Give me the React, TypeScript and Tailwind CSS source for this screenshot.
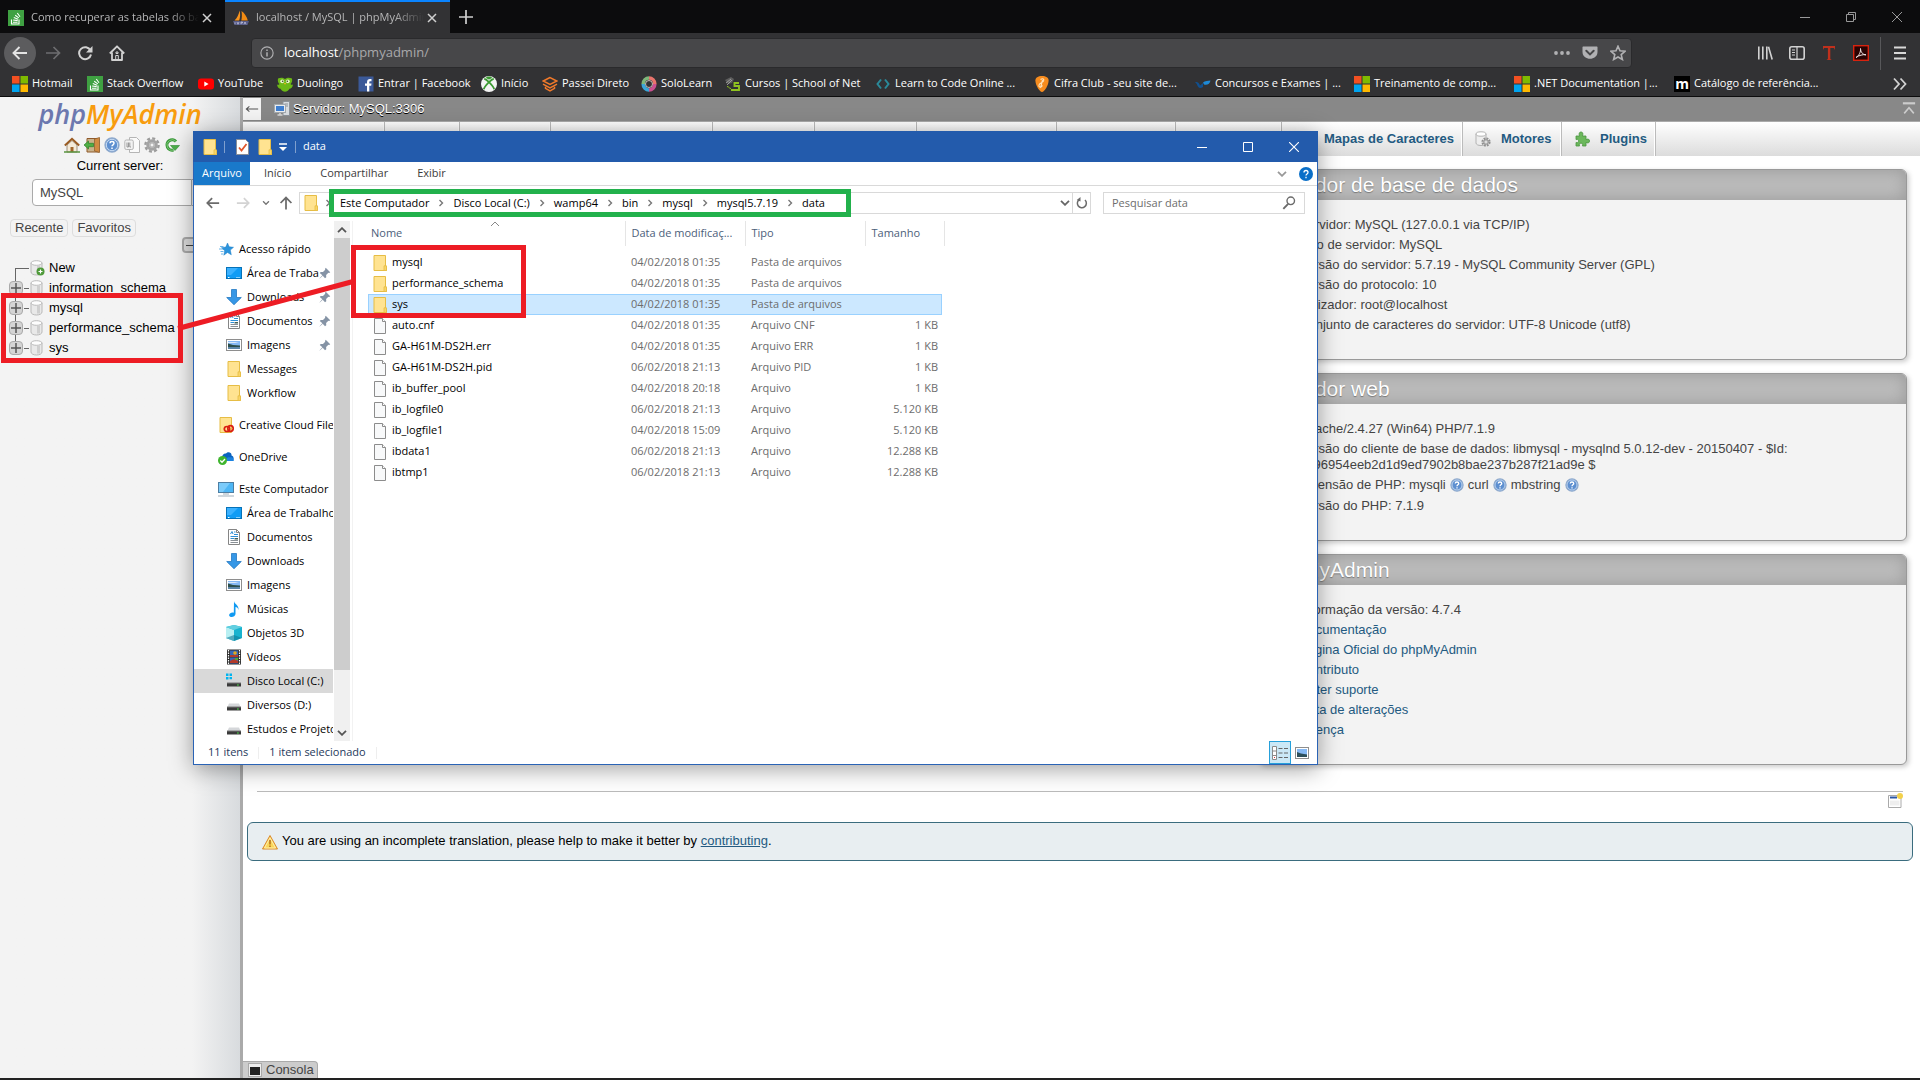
import React from "react";

type P = { className?: string; children?: React.ReactNode };

const Svg = ({ className = "size-4", children }: P) => (
  <svg viewBox="0 0 16 16" className={`shrink-0 ${className}`} fill="none" aria-hidden="true">
    {children}
  </svg>
);

/* ---------- site icons ---------- */
const StackIcon = () => (
  <Svg>
    <rect width="16" height="16" fill="#3fa142" />
    <path d="M3.5 9.5v4.5h7.5V9.5M5 12.2h4.6M5.1 10l4.6.6M5.8 7.6l4.3 1.6M7.2 5.2l3.6 2.7M9.3 3l2.7 3.7" stroke="#fff" strokeWidth="1.1" />
  </Svg>
);
const MsIcon = () => (
  <Svg>
    <path fill="#f25022" d="M0 0h7.5v7.5H0z" />
    <path fill="#7fba00" d="M8.5 0H16v7.5H8.5z" />
    <path fill="#00a4ef" d="M0 8.5h7.5V16H0z" />
    <path fill="#ffb900" d="M8.5 8.5H16V16H8.5z" />
  </Svg>
);
const YoutubeIcon = () => (
  <Svg>
    <rect y="2.5" width="16" height="11" rx="3" fill="#f00" />
    <path d="M6.3 5.6v4.8L10.6 8z" fill="#fff" />
  </Svg>
);
const DuoIcon = () => (
  <Svg>
    <path d="M1 2.5C4 1.500 5.500 1.500 8 3c2.500-1.500 4-1.500 7-.5.6 3-.4 4.500-1.500 5.500 1 1 1.500 1 2.500.5-.5 3-2 4-3.500 4.300C11.500 15 9.500 15.500 8 15.800c-1.500-.3-3.500-1-4.500-3C2 12.500.5 11.500 0 8.500c1 .5 1.500.5 2.500-.5C1.400 7 .4 5.500 1 2.500z" fill="#6cb816" />
    <circle cx="5.200" cy="5.300" r="1.900" fill="#e8f3c8" />
    <circle cx="10.800" cy="5.300" r="1.900" fill="#e8f3c8" />
    <circle cx="5.700" cy="5.300" r=".8" fill="#31531a" />
    <circle cx="10.300" cy="5.300" r=".8" fill="#31531a" />
    <path d="M6.800 7h2.400L8 8.800z" fill="#f5b921" />
  </Svg>
);
const FacebookIcon = () => (
  <Svg>
    <rect x=".5" y=".5" width="15" height="15" fill="#3b5998" />
    <path d="M9 15.500V9.800h-2V7.600h2V6.200C9 4 10.200 3 12 3h1.500v2.200h-1.200c-.8 0-1 .4-1 1.100v1.300h2.200l-.3 2.200h-1.900v5.700z" fill="#fff" />
  </Svg>
);
const XboxIcon = () => (
  <Svg>
    <circle cx="8" cy="8" r="8" fill="#f4f4f4" />
    <path d="M4 2.200C5.500 2 7 2.800 8 3.600 9 2.800 10.500 2 12 2.200 10.500.9 9.300.5 8 .5S5.500.9 4 2.200z" fill="#3c9a33" />
    <path d="M3.200 2.800C4.800 3 6.500 4.500 8 6.200 9.500 4.500 11.200 3 12.800 2.800M8 6.200c-3 3-4.800 5.500-5.200 7M8 6.200c3 3 4.800 5.500 5.200 7" stroke="#3c9a33" strokeWidth="1.800" />
  </Svg>
);
const PasseiIcon = () => (
  <Svg>
    <path d="M8 1.500L1.200 5 8 8.500 14.800 5z" stroke="#f0792a" strokeWidth="1.500" />
    <path d="M1 8.200l7 3.600 7-3.600M3.500 10.800v1.500L8 15l4.500-2.700v-1.500" stroke="#f0792a" strokeWidth="1.500" />
  </Svg>
);
const SoloIcon = () => (
  <Svg>
    <path d="M8 2A5.800 6 0 0 1 13.800 8" stroke="#e8746c" strokeWidth="3.600" />
    <path d="M13.800 8A5.800 6 0 0 1 8 14" stroke="#c94f8f" strokeWidth="3.600" />
    <path d="M8 14A5.800 6 0 0 1 2.200 8" stroke="#3aa6d8" strokeWidth="3.600" />
    <path d="M2.200 8A5.800 6 0 0 1 8 2" stroke="#7fb77a" strokeWidth="3.600" />
    <circle cx="8" cy="8" r="3.500" stroke="#e9ded6" strokeWidth=".8" />
  </Svg>
);
const SchoolIcon = () => (
  <Svg>
    <path d="M0 4l6-3 3 2-2 4-4 1z" fill="#5d5d5d" />
    <path d="M1 7l5-4M2 9l5-5" stroke="#a3a3a3" strokeWidth=".9" />
    <path d="M14 7H9.500v3H14v4H6" stroke="#8fc21f" strokeWidth="1.900" />
    <path d="M2 10.500c2 0 2 2 4 2" stroke="#8fc21f" strokeWidth="1" />
  </Svg>
);
const LearnIcon = () => (
  <Svg>
    <path d="M6 3.500L2.500 8 6 12.500M10 3.500L13.500 8 10 12.500" stroke="#2a8a9a" strokeWidth="2" />
  </Svg>
);
const CifraIcon = () => (
  <Svg>
    <path d="M8 0c4 0 6.600 1.500 6.600 4.500C14.600 9 10.500 16 8 16S1.400 9 1.400 4.500C1.400 1.500 4 0 8 0z" fill="#f78c1e" />
    <path d="M6.500 3.500c2.500-1.500 4-.5 3 1.500s-4 1.500-4.500 4 2 3 3.500.5M8.500 4l-2 8" stroke="#ffe4bd" strokeWidth="1.100" />
  </Svg>
);
const ConcursosIcon = () => (
  <Svg>
    <path d="M0 6c4 0 4 1.500 5 3.500L8 7v4c-2 1.500-4 1.300-5-.5C2 9 2 7.500 0 6z" fill="#11508f" />
    <path d="M8 6.500C10 4.500 13 5 15.500 4.500 15 8 12 9.500 9 8.500z" fill="#1e8ad6" />
  </Svg>
);
const MIcon = () => (
  <span className="flex size-4 shrink-0 items-center justify-center bg-black font-['Open_Sans',sans-serif] text-[14px] leading-4 font-bold text-white">m</span>
);
const MysqlBoatIcon = () => (
  <Svg>
    <path d="M6.500.5c1 3 .8 7-.3 10H1.500C4 8 6 4 6.500.500z" fill="#f7931e" />
    <path d="M8.500 1c3 2 5.500 6 6.300 9.500H8.300c.7-3 .8-6 .2-9.500z" fill="#f28a12" />
    <path d="M0 11h16l-1.500 4H1.500z" fill="#555a86" />
    <path d="M2 12.200v2M4 12l1 2.300L6 12M8 14.200V12h1.500v1H8M11 14.300l1-2.300 1 2.300" stroke="#cfcfe4" strokeWidth=".7" />
  </Svg>
);

/* ---------- desktop icons ---------- */
const Folder = ({ className = "size-4" }: P) => (
  <Svg className={className}>
    <path d="M2 .5h11.500v11H14.500v4H2z" fill="#ffe391" stroke="#e6bd45" strokeWidth="1" />
    <path d="M12 15.500v-4.700h2.500v4.700z" fill="#f9d568" stroke="#e6bd45" strokeWidth=".8" />
  </Svg>
);
const CloudFolder = () => (
  <Svg>
    <path d="M2 .5h11.500v15H2z" fill="#ffe391" stroke="#e6bd45" />
    <ellipse cx="9" cy="12" rx="2.700" ry="2.500" stroke="#da1f12" strokeWidth="1.700" />
    <ellipse cx="12.500" cy="11.500" rx="2.700" ry="2.900" stroke="#da1f12" strokeWidth="1.700" />
  </Svg>
);
const FileIcon = () => (
  <Svg>
    <path d="M2.500.5h8l3 3v12h-11z" fill="#f8f9fa" stroke="#8c8c8c" />
    <path d="M10.500.5v3h3" stroke="#8c8c8c" fill="#fff" />
  </Svg>
);
const StarIcon = () => (
  <Svg>
    <path d="M9.500 2l1.700 3.800 4.300.5-3.200 2.800 1 4.700-3.800-2.300-3.700 2.700.9-4.500L3.500 6.700l4.300-.6z" fill="#2b94dd" stroke="#1c7fc6" strokeWidth=".5" />
    <path d="M2 5.500h3.500M1 8h4M2.500 10.500h3M3 13h2" stroke="#5aade8" strokeWidth=".9" />
  </Svg>
);
const DesktopIcon = () => (
  <Svg>
    <rect x=".5" y="2.500" width="15" height="11" fill="#109cf5" stroke="#0672b8" />
    <path d="M1 2.900L12 3 5 10H1z" fill="#3bb1ff" />
    <path d="M2 12.500h1.500M10.500 12.500h1M12.500 12.500h1" stroke="#fff" />
  </Svg>
);
const DownIcon = () => (
  <Svg>
    <path d="M5.500.5h5v8h4.800L8 15.700.7 8.500h4.800z" fill="#3697e6" stroke="#2478c1" strokeWidth=".8" />
  </Svg>
);
const DocIcon = () => (
  <Svg>
    <path d="M2.500.5h8l3 3v12h-11z" fill="#fff" stroke="#858585" />
    <path d="M10.500.5v3h3" stroke="#858585" />
    <path d="M4.500 5L6 2.500 7 5M8 3h1.500M8 5.500h4M4.500 7.500h7.500M4.500 9.500h3.500" stroke="#2f8fd6" />
    <path d="M8.500 9h3.500v1.500H8.500z" fill="#43605a" />
    <path d="M4.500 11.500h7.500M4.500 13.500h7.500" stroke="#8a9096" />
  </Svg>
);
const PictureIcon = () => (
  <Svg>
    <rect x=".5" y="2.500" width="15" height="11" fill="#fff" stroke="#8e8e8e" />
    <path d="M2 4h12v8H2z" fill="#86b9f4" />
    <path d="M2 6.500l5 1.500 7 .5V10H2z" fill="#2d4f4b" />
    <path d="M2 10h12v2H2z" fill="#5c86a8" />
    <path d="M2 5h7l4 1H2z" fill="#dceafa" />
  </Svg>
);
const OneDriveIcon = () => (
  <Svg>
    <path d="M4 10c-.5-4 2-6 4-5.500C10 2 14 3.500 13.500 6.500 16 7 16.500 11 14 12H5z" fill="#0a63c0" />
    <path d="M8 12c0-3 2-4.500 4-3.500 2-1 4 .5 3.800 3.500z" fill="#1b82e0" />
    <circle cx="4.500" cy="11.500" r="4.500" fill="#3fb52e" />
    <path d="M2.300 11.500l1.700 1.700L7 10" stroke="#fff" strokeWidth="1.300" />
  </Svg>
);
const PcIcon = () => (
  <Svg>
    <rect x=".5" y="1.500" width="15" height="10" fill="#4db6f5" stroke="#4d7ea3" />
    <path d="M1 2h11L5 11H1z" fill="#7bcbfa" />
    <path d="M5 13h6M0 15h16" stroke="#9fb0bc" strokeWidth="1.200" />
  </Svg>
);
const MusicIcon = () => (
  <Svg>
    <path d="M8 0c.3 3 5 4 4.500 9-.5-2-1.500-2.800-3-3v7c-.3 2-2.500 3.200-4.500 2.900-2-.4-2.500-2-1-3.300 1.200-1 2.600-1.200 3.800-.8z" fill="#0f9af2" />
  </Svg>
);
const CubeIcon = () => (
  <Svg>
    <path d="M0 2l8-2 8 2v11l-8 3-8-3z" fill="#18b3cf" />
    <path d="M0 2l8 3v11l-8-3z" fill="#b8eff2" />
    <path d="M0 2l8-2 8 2-8 3z" fill="#62cfe0" />
    <path d="M0 13l8-3 8 3-8 3z" fill="#0d7c99" opacity=".6" />
  </Svg>
);
const VideoIcon = () => (
  <Svg>
    <rect x="1" y=".5" width="14" height="15" fill="#2e2e2e" />
    <path d="M2.500 1v14M13.500 1v14" stroke="#fff" strokeWidth="1.200" strokeDasharray="1.500 1" />
    <path d="M4 1.500h8v6H4zM4 8.500h8v6H4z" fill="#3666b5" />
    <circle cx="9" cy="4" r="1.800" fill="#e2a91d" />
    <path d="M4 6h8v2H4zM4 12l4-2 4 2v2H4z" fill="#b23a2a" />
    <path d="M9 9h3v2H9z" fill="#56a036" />
  </Svg>
);
const DriveIcon = ({ win = false }: { win?: boolean }) => (
  <Svg>
    {win && <path d="M0 .5h2.500V3H0zM3.500.5H6V3H3.500zM0 4h2.500v2.500H0zM3.500 4H6v2.500H3.500z" fill="#00b4f0" />}
    <path d="M3 6.500h10l1.800 4H1.200z" fill="#d5d7da" />
    <path d="M1 10h14v3.500H1z" fill="#3a3a3a" />
    <path d="M1 10h14" stroke="#777" />
    <path d="M11 12h1.800" stroke="#4be04b" strokeWidth="1.200" />
  </Svg>
);
const PinIcon = () => (
  <Svg className="size-3">
    <path d="M9 1l6 6-1.500 1-1-.3-3 3 .2 3L8 15l-3-3.500L1 15.200.800 15l3.700-4L1 8l1.300-1.500 3 .2 3-3L8 2.500z" fill="#8593a5" />
  </Svg>
);

/* ---------- phpMyAdmin icons ---------- */
const HomeIcon = () => (
  <Svg>
    <path d="M3 8v7h10V8L8 3.500z" fill="#f4ead9" stroke="#8a7a62" strokeWidth=".8" />
    <path d="M.8 8.500L8 1.700l7.200 6.800" stroke="#9a5b22" strokeWidth="1.900" />
    <path d="M6.500 15v-5h3v5" fill="#a0662c" />
    <path d="M0 15h16" stroke="#5a9440" strokeWidth="1.500" />
  </Svg>
);
const ExitIcon = () => (
  <Svg>
    <path d="M3 1.500h12V15H3z" fill="#c9b28c" stroke="#8f5a2b" />
    <path d="M10.500 2l5-1.500v15l-5-1.500z" fill="#d08a42" stroke="#8a5a28" strokeWidth=".7" />
    <path d="M0 8l4.500-4v2.300h5v3.400h-5V12z" fill="#4fae45" stroke="#2d7f2a" strokeWidth=".7" />
  </Svg>
);
const HelpIcon = ({ className = "size-4" }: P) => (
  <Svg className={className}>
    <circle cx="8" cy="8" r="7" fill="#5d8fd0" stroke="#8ea9cc" strokeWidth="1.300" />
    <circle cx="8" cy="8" r="5.700" stroke="#d6e4f5" strokeWidth=".9" />
    <path d="M6 6.300C6 4 10 4 10 6.300c0 1.500-2 1.500-2 3M8 10.500V12" stroke="#fff" strokeWidth="1.500" />
  </Svg>
);
const DocsIcon = () => (
  <Svg>
    <path d="M5.500.5h7l3 3v12h-10z" fill="#fafafa" stroke="#b5b5b5" />
    <rect x=".8" y="3" width="8.500" height="9.500" rx="1.500" fill="#f2f2f2" stroke="#b5b5b5" />
    <path d="M3 5.500v4.500h1.500V5.500M5.800 5.500v4.500H7" stroke="#999" />
  </Svg>
);
const GearIcon = () => (
  <Svg>
    <circle cx="8" cy="8" r="6.600" stroke="#9c9c9c" strokeWidth="2.400" strokeDasharray="3 2.180" />
    <circle cx="8" cy="8" r="4.300" fill="#d0d0d0" stroke="#a4a4a4" strokeWidth="3" />
    <circle cx="8" cy="8" r="2" fill="#f3f3f3" stroke="#999" strokeWidth=".7" />
  </Svg>
);
const ReloadGreen = () => (
  <Svg>
    <path d="M12 4.500A5.200 5.200 0 1 0 9.500 13" stroke="#3c9a3c" strokeWidth="3" />
    <path d="M12 4.500A5.200 5.200 0 1 0 9.500 13" stroke="#7fcb78" strokeWidth="1" />
    <path d="M6.500 8.500h9l-4.500 5z" fill="#4caf4a" stroke="#2f862f" strokeWidth=".6" />
  </Svg>
);
const DbIcon = ({ plus = false }: { plus?: boolean }) => (
  <Svg>
    <path d="M2 3v9c0 1.800 2.500 3 5.500 3S13 13.800 13 12V3z" fill="#e9e9e9" stroke="#b3b3b3" strokeWidth=".9" />
    <ellipse cx="7.500" cy="3" rx="5.500" ry="2.300" fill="#fdfdfd" stroke="#b3b3b3" strokeWidth=".9" />
    <path d="M9.500 5.500v8" stroke="#cfcfcf" strokeWidth="3" />
    {plus && (
      <>
        <circle cx="11.500" cy="11.500" r="4" fill="#4f9a3a" />
        <path d="M9.500 11.500h4M11.500 9.500v4" stroke="#fff" strokeWidth="1.200" />
      </>
    )}
  </Svg>
);
const ServerIcon = () => (
  <Svg>
    <path d="M9 .5h6.500v14H9z" fill="#d9dde1" stroke="#8d9399" />
    <path d="M10.500 3h3.500M10.500 5h3.500" stroke="#8d9399" />
    <rect x=".5" y="3.500" width="11" height="8" fill="#e9ecef" stroke="#a3a9ae" />
    <path d="M2 5h8v5H2z" fill="#3f7fd0" />
    <path d="M3.500 14h5M6 12v2" stroke="#d7d7d7" strokeWidth="1.500" />
  </Svg>
);
const EngineIcon = () => (
  <Svg>
    <path d="M1 3v9c0 1.500 2 2.500 5 2.500s5-1 5-2.500V3z" fill="#eee" stroke="#b3b3b3" />
    <ellipse cx="6" cy="3" rx="5" ry="2.200" fill="#fff" stroke="#b3b3b3" />
    <circle cx="11" cy="11" r="3.500" stroke="#8f8f8f" strokeWidth="2.200" strokeDasharray="1.800 .95" />
    <circle cx="11" cy="11" r="2.200" fill="#ddd" stroke="#8f8f8f" />
  </Svg>
);
const PluginIcon = () => (
  <Svg>
    <path d="M2 5h3.500C4.500 2 5.500 1 7 1s2.500 1 1.500 4H12v3.500c2.500-1 3.500 0 3.500 1.500S14.500 12.500 12 11.500V15H8.500c.8-2-.3-2.800-1.500-2.800S4.700 13 5.500 15H2v-3.500c2 .8 2.600-.3 2.600-1.500S4 7.800 2 8.500z" fill="#6cb85c" stroke="#4a9440" strokeWidth=".8" />
  </Svg>
);

/* ---------- data ---------- */
const bookmarks: { label: string; icon: React.ReactNode; w: string }[] = [
  { label: "Hotmail", icon: <MsIcon />, w: "w-[75px]" },
  { label: "Stack Overflow", icon: <StackIcon />, w: "w-[111px]" },
  { label: "YouTube", icon: <YoutubeIcon />, w: "w-[79px]" },
  { label: "Duolingo", icon: <DuoIcon />, w: "w-[81px]" },
  { label: "Entrar | Facebook", icon: <FacebookIcon />, w: "w-[123px]" },
  { label: "Início", icon: <XboxIcon />, w: "w-[61px]" },
  { label: "Passei Direto", icon: <PasseiIcon />, w: "w-[99px]" },
  { label: "SoloLearn", icon: <SoloIcon />, w: "w-[84px]" },
  { label: "Cursos | School of Net", icon: <SchoolIcon />, w: "w-[150px]" },
  { label: "Learn to Code Online ...", icon: <LearnIcon />, w: "w-[159px]" },
  { label: "Cifra Club - seu site de...", icon: <CifraIcon />, w: "w-[161px]" },
  { label: "Concursos e Exames | ...", icon: <ConcursosIcon />, w: "w-[159px]" },
  { label: "Treinamento de comp...", icon: <MsIcon />, w: "w-[160px]" },
  { label: ".NET Documentation |...", icon: <MsIcon />, w: "w-[160px]" },
  { label: "Catálogo de referência...", icon: <MIcon />, w: "w-[160px]" },
];

type Nav = { label: string; icon: React.ReactNode; root?: boolean; pin?: boolean; active?: boolean; gap?: boolean };
const navItems: Nav[] = [
  { label: "Acesso rápido", icon: <StarIcon />, root: true },
  { label: "Área de Traba", icon: <DesktopIcon />, pin: true },
  { label: "Downloads", icon: <DownIcon />, pin: true },
  { label: "Documentos", icon: <DocIcon />, pin: true },
  { label: "Imagens", icon: <PictureIcon />, pin: true },
  { label: "Messages", icon: <Folder /> },
  { label: "Workflow", icon: <Folder /> },
  { label: "Creative Cloud Files", icon: <CloudFolder />, root: true, gap: true },
  { label: "OneDrive", icon: <OneDriveIcon />, root: true, gap: true },
  { label: "Este Computador", icon: <PcIcon />, root: true, gap: true },
  { label: "Área de Trabalho", icon: <DesktopIcon /> },
  { label: "Documentos", icon: <DocIcon /> },
  { label: "Downloads", icon: <DownIcon /> },
  { label: "Imagens", icon: <PictureIcon /> },
  { label: "Músicas", icon: <MusicIcon /> },
  { label: "Objetos 3D", icon: <CubeIcon /> },
  { label: "Vídeos", icon: <VideoIcon /> },
  { label: "Disco Local (C:)", icon: <DriveIcon win />, active: true },
  { label: "Diversos (D:)", icon: <DriveIcon /> },
  { label: "Estudos e Projetos", icon: <DriveIcon /> },
];

const files: [string, string, string, string][] = [
  ["mysql", "04/02/2018 01:35", "Pasta de arquivos", ""],
  ["performance_schema", "04/02/2018 01:35", "Pasta de arquivos", ""],
  ["sys", "04/02/2018 01:35", "Pasta de arquivos", ""],
  ["auto.cnf", "04/02/2018 01:35", "Arquivo CNF", "1 KB"],
  ["GA-H61M-DS2H.err", "04/02/2018 01:35", "Arquivo ERR", "1 KB"],
  ["GA-H61M-DS2H.pid", "06/02/2018 21:13", "Arquivo PID", "1 KB"],
  ["ib_buffer_pool", "04/02/2018 20:18", "Arquivo", "1 KB"],
  ["ib_logfile0", "06/02/2018 21:13", "Arquivo", "5.120 KB"],
  ["ib_logfile1", "04/02/2018 15:09", "Arquivo", "5.120 KB"],
  ["ibdata1", "06/02/2018 21:13", "Arquivo", "12.288 KB"],
  ["ibtmp1", "06/02/2018 21:13", "Arquivo", "12.288 KB"],
];

const crumbs = ["Este Computador", "Disco Local (C:)", "wamp64", "bin", "mysql", "mysql5.7.19", "data"];

/* ---------- browser chrome ---------- */
const TabClose = () => (
  <button aria-label="Fechar aba" className="flex size-4 shrink-0 items-center justify-center">
    <svg viewBox="0 0 10 10" className="size-2.5" stroke="#d0d0d0" strokeWidth="1.500">
      <path d="M1 1l8 8M9 1L1 9" />
    </svg>
  </button>
);

const BrowserTab = ({ title, icon, active }: { title: string; icon: React.ReactNode; active?: boolean }) => (
  <div className={`flex w-[225px] items-center border-t-2 pr-2.5 pl-2 ${active ? "border-[#0a84ff] bg-[#323234]" : "border-transparent"}`}>
    {icon}
    <span className="ml-[7px] min-w-0 flex-1 overflow-hidden whitespace-nowrap text-[#b6b6b7] [mask-image:linear-gradient(to_right,#000_82%,transparent)]">{title}</span>
    <TabClose />
  </div>
);

const Browser = () => (
  <header className="font-['Open_Sans',sans-serif] text-[11px] text-white">
    <div className="flex h-[33px] bg-[#0c0c0d]">
      <BrowserTab title="Como recuperar as tabelas do banco" icon={<StackIcon />} />
      <BrowserTab title="localhost / MySQL | phpMyAdmin" icon={<MysqlBoatIcon />} active />
      <button aria-label="Nova aba" className="flex w-8 items-center justify-center">
        <svg viewBox="0 0 14 14" className="size-3.5" stroke="#d0d0d0" strokeWidth="1.700"><path d="M7 0v14M0 7h14" /></svg>
      </button>
      <div className="ml-auto flex">
        <button aria-label="Minimizar" className="flex w-[46px] items-center justify-center">
          <svg viewBox="0 0 10 10" className="size-2.5" stroke="#999"><path d="M0 5.500h10" /></svg>
        </button>
        <button aria-label="Restaurar" className="flex w-[46px] items-center justify-center">
          <svg viewBox="0 0 10 10" className="size-2.5" stroke="#999" fill="none"><path d="M.5 2.500h7v7h-7zM2.500 2.500v-2h7v7h-2" /></svg>
        </button>
        <button aria-label="Fechar" className="flex w-[46px] items-center justify-center">
          <svg viewBox="0 0 10 10" className="size-2.5" stroke="#999"><path d="M0 0l10 10M10 0L0 10" /></svg>
        </button>
      </div>
    </div>

    <div className="flex h-10 items-center bg-[#323234] pl-1">
      <button aria-label="Voltar" className="flex size-8 items-center justify-center rounded-full bg-[#5c5c5e]">
        <Svg><path d="M15 8H2M7.500 2L1.500 8l6 6" stroke="#e4e4e4" strokeWidth="1.900" /></Svg>
      </button>
      <button aria-label="Avançar" className="ml-px flex size-8 items-center justify-center">
        <Svg><path d="M1 8h13M8.500 2l6 6-6 6" stroke="#6e6e70" strokeWidth="1.700" /></Svg>
      </button>
      <button aria-label="Recarregar" className="flex size-8 items-center justify-center">
        <Svg><path d="M13.500 5.500A6 6 0 1 0 14 9.500" stroke="#d2d2d2" strokeWidth="2" /><path d="M15.500 1v6.500H9z" fill="#d2d2d2" /></Svg>
      </button>
      <button aria-label="Página inicial" className="flex size-8 items-center justify-center">
        <Svg><path d="M.8 8.500L8 1.300l7.200 7.200M3 7.500V15h10V7.500" stroke="#d2d2d2" strokeWidth="1.800" strokeLinejoin="round" /><path d="M6.700 15v-4.500h2.600V15M7 7h2v1.500H7z" stroke="#d2d2d2" strokeWidth="1" /></Svg>
      </button>
      <div className="ml-[118px] flex h-[30px] min-w-0 flex-1 items-center rounded-sm border border-[#2a2a2c] bg-[#474749] pr-[5px] pl-2">
        <Svg className="size-3.5"><circle cx="8" cy="8" r="7" stroke="#b1b1b3" strokeWidth="1.300" /><path d="M8 7v5M8 4v1.800" stroke="#b1b1b3" strokeWidth="1.700" /></Svg>
        <p className="ml-2.5 text-[13px] text-[#a9a9ab]"><span className="text-white">localhost</span>/phpmyadmin/</p>
        <div className="ml-auto flex items-center gap-3">
          <Svg><circle cx="2" cy="8" r="1.900" fill="#b1b1b3" /><circle cx="8" cy="8" r="1.900" fill="#b1b1b3" /><circle cx="14" cy="8" r="1.900" fill="#b1b1b3" /></Svg>
          <Svg><path d="M1.500 1.500h13c.6 0 1 .4 1 1V7c0 9-15 9-15 0V2.500c0-.6.4-1 1-1z" fill="#b1b1b3" /><path d="M4.300 5.800L8 9.400l3.700-3.600" stroke="#474749" strokeWidth="2" strokeLinecap="round" /></Svg>
          <Svg><path d="M8 1.200l2 4.600 5 .5-3.800 3.300 1.200 4.900L8 12l-4.400 2.500 1.200-4.900L1 6.300l5-.5z" stroke="#b1b1b3" strokeWidth="1.600" /></Svg>
        </div>
      </div>
      <div className="ml-[125px] flex items-center gap-4 pr-3">
        <Svg><path d="M1.800 1.500v13M5.800 1.500v13M9.800 1.500v13M11.500 1.800l3.700 12.700" stroke="#d2d2d2" strokeWidth="1.600" /></Svg>
        <Svg><rect x=".8" y="1.800" width="14.400" height="12.400" rx="2" stroke="#d2d2d2" strokeWidth="1.600" /><path d="M8 2v12M3 5h3M3 7.500h3M3 10h3" stroke="#d2d2d2" strokeWidth="1.200" /></Svg>
        <Svg><path d="M2 1h12v4l-1-2H9.300v11l1.400 1H5.500l1.400-1V3H3L2 5z" fill="#c0301c" /></Svg>
        <Svg><rect x=".7" y=".7" width="14.600" height="14.600" fill="#2a0303" stroke="#d8230f" strokeWidth="1.400" /><path d="M3 12.500c3-1.500 5-6 4.500-9 0 4 3 6.500 5.500 6.300-3-.6-7 .6-10 2.700z" stroke="#f3e5e3" strokeWidth="1" /></Svg>
        <span className="-mr-[5px] -ml-[5px] h-[33px] w-px bg-[#58585a]" />
        <Svg><path d="M2 2.500h12M2 8h12M2 13.500h12" stroke="#d8d8d8" strokeWidth="1.900" /></Svg>
      </div>
    </div>

    <nav className="flex h-6 items-center border-b border-[#0c0c0d] bg-[#323234] pr-3 pb-0.5 pl-3">
      {bookmarks.map((b) => (
        <a key={b.label} href="#" className={`flex shrink-0 items-center gap-1 whitespace-nowrap ${b.w}`}>
          {b.icon}
          {b.label}
        </a>
      ))}
      <button aria-label="Mais favoritos" className="ml-auto"><Svg><path d="M2 2.500L7 8l-5 5.500M8.500 2.500l5 5.500-5 5.500" stroke="#d2d2d2" strokeWidth="1.800" /></Svg></button>
    </nav>
  </header>
);

/* ---------- phpMyAdmin ---------- */
const Expander = () => (
  <button aria-label="Expandir" className="relative flex size-3.5 items-center justify-center rounded-sm border border-[#aaa] bg-[#d4d4d4]">
    <svg viewBox="0 0 10 10" className="size-2.5" stroke="#555" strokeWidth="1.500"><path d="M0 5h10M5 0v10" /></svg>
  </button>
);

const Sidebar = () => (
  <aside className="w-60 shrink-0 bg-linear-to-r from-[#f3f3f3] from-80% to-[#d8dbde]">
    <h1 className="flex h-9 items-center justify-center pb-0.5 font-['Open_Sans',sans-serif] text-[27px] leading-8 font-semibold italic text-[#6c78af]">
      php<span className="text-[#f89c0e]">MyAdmin</span>
    </h1>
    <div className="flex h-6 items-center justify-center gap-1 pb-px pl-1">
      <HomeIcon /><ExitIcon /><HelpIcon /><DocsIcon /><GearIcon /><ReloadGreen />
    </div>
    <label htmlFor="server" className="block h-[18px] text-center leading-[18px] text-black">Current server:</label>
    <div className="mt-1 ml-8 flex h-[27px]">
      <select id="server" className="w-40 appearance-none rounded-l-sm border border-[#aaa] bg-white pl-[7px] text-[#444]">
        <option>MySQL</option>
      </select>
      <span className="w-5 border-y border-r border-[#aaa] bg-[#eee]" />
    </div>
    <div className="mt-[13px] ml-2.5 flex gap-1 text-[#444]">
      <button className="h-[18px] rounded border border-[#ddd] px-1 leading-4">Recente</button>
      <button className="h-[18px] rounded border border-[#ddd] px-1 leading-4">Favoritos</button>
    </div>
    <div className="flex h-[21px] justify-end pr-[42px]">
      <button aria-label="Recolher" className="flex size-4 items-center justify-center rounded-sm border-2 border-[#aaa] bg-[#ddd]"><span className="h-px w-2 bg-[#444]" /></button>
    </div>
    <ul className="relative pl-2 text-black before:absolute before:top-[10px] before:left-[15px] before:h-20 before:w-px before:bg-[#666]">
      {["New", "information_schema", "mysql", "performance_schema", "sys"].map((n, i) => (
        <li key={n} className="flex h-5 items-center">
          <span className="w-4 pl-px">{i > 0 && <Expander />}</span>
          <span className={i ? "h-px w-[5px] bg-[#666]" : "-ml-2 h-px w-[13px] bg-[#666]"} />
          <DbIcon plus={i === 0} />
          <a href="#" className="ml-1 pb-px">{n}</a>
        </li>
      ))}
    </ul>
  </aside>
);

const topTabs = ["w-[142px]", "w-[75px]", "w-[91px]", "w-[162px]", "w-[102px]", "w-[102px]", "w-[140px]", "w-[119px]", "w-[106px]"];
const tabCls = "flex h-full shrink-0 items-center border-r border-[#bbb] whitespace-nowrap shadow-[inset_-1px_0_0_#fff]";

const Panel = ({ title, children }: { title: string; children: React.ReactNode }) => (
  <section className="overflow-hidden rounded-md border border-[#999] bg-[#f3f3f3] shadow-[2px_2px_5px_#ccc]">
    <h2 className="h-[30px] bg-[#bbb] pl-2 text-[21px] leading-[30px] text-white shadow-[inset_0_0_16px_#999] [text-shadow:0_1px_1px_#777]">{title}</h2>
    <ul className="list-disc pt-[15px] pb-6 pl-10 leading-4">{children}</ul>
  </section>
);

const links = ["Documentação", "Página Oficial do phpMyAdmin", "Contributo", "Obter suporte", "Lista de alterações", "Licença"];

const Main = () => (
  <main className="flex min-w-0 flex-1 flex-col border-l-[3px] border-[#aaa] bg-white">
    <div className="flex h-[25px] items-center border-b border-[#aaa] bg-[#888] pr-1">
      <button aria-label="Ocultar painel" className="flex h-[22px] w-[18px] items-center justify-center bg-[#f3f3f3]">
        <Svg className="size-3.5"><path d="M15 8H1.500M5 5L1.500 8 5 11" stroke="#555" strokeWidth="1.200" /></Svg>
      </button>
      <span className="ml-[13px]"><ServerIcon /></span>
      <a href="#" className="ml-[3px] text-white [text-shadow:0_1px_0_#000]">Servidor: MySQL:3306</a>
      <Svg className="ml-auto size-3.5"><path d="M1 1.500h14" stroke="#ccc" strokeWidth="2.500" /><path d="M2.500 13L8 6.500l5.500 6.500" stroke="#ccc" strokeWidth="1.800" /></Svg>
    </div>
    <nav className="flex h-[34px] bg-linear-to-b from-white to-[#dcdcdc] font-bold text-[#235a81]">
      {topTabs.map((w, i) => <span key={i} className={`${tabCls} ${w}`} />)}
      <a href="#" className={`${tabCls} w-[181px] justify-end pr-2`}>Mapas de Caracteres</a>
      <a href="#" className={`${tabCls} w-[99px] gap-2.5 pl-3`}><EngineIcon />Motores</a>
      <a href="#" className={`${tabCls} w-[94px] gap-2.5 pl-3`}><PluginIcon />Plugins</a>
    </nav>

    <div className="mt-[13px] flex justify-end pr-[13px]">
      <div className="flex w-[39%] flex-col gap-[13px]">
        <Panel title="Servidor de base de dados">
          <li className="py-0.5">Servidor: MySQL (127.0.0.1 via TCP/IP)</li>
          <li className="py-0.5">Tipo de servidor: MySQL</li>
          <li className="py-0.5">Versão do servidor: 5.7.19 - MySQL Community Server (GPL)</li>
          <li className="py-0.5">Versão do protocolo: 10</li>
          <li className="py-0.5">Utilizador: root@localhost</li>
          <li className="py-0.5">Conjunto de caracteres do servidor: UTF-8 Unicode (utf8)</li>
        </Panel>
        <Panel title="Servidor web">
          <li className="py-0.5">Apache/2.4.27 (Win64) PHP/7.1.9</li>
          <li className="py-0.5">Versão do cliente de base de dados: libmysql - mysqlnd 5.0.12-dev - 20150407 - $Id: b396954eeb2d1d9ed7902b8bae237b287f21ad9e $</li>
          <li className="h-[21px] py-0.5">
            <span className="flex items-center gap-1">Extensão de PHP: mysqli <HelpIcon className="size-3.5" /> curl <HelpIcon className="size-3.5" /> mbstring <HelpIcon className="size-3.5" /></span>
          </li>
          <li className="py-0.5">Versão do PHP: 7.1.9</li>
        </Panel>
        <Panel title="phpMyAdmin">
          <li className="py-0.5">Informação da versão: 4.7.4</li>
          {links.map((l) => <li key={l} className="py-0.5"><a href="#" className="text-[#235a81]">{l}</a></li>)}
        </Panel>
      </div>
    </div>

    <div className="mt-[26px] mr-[17px] ml-[14px] flex h-[31px] justify-end border-t border-[#bbb] pt-px">
      <Svg><path d="M1.500 2.500h12.500v12H1.500z" fill="#fff" stroke="#aaa" /><path d="M3 4.500h7" stroke="#2c56a4" strokeWidth="2" /><path d="M3 7.500h9.500v5H3z" fill="#eee" /><circle cx="13" cy="3" r="3" fill="#f3d14b" /></Svg>
    </div>
    <div className="mr-[7px] ml-1 flex h-[39px] items-center rounded-md border border-[#3a6c7e] bg-[#e8eef1] pl-3.5 text-black">
      <Svg><path d="M8 1.500L15.500 15H.5z" fill="#fbd75b" stroke="#d9882c" strokeLinejoin="round" /><path d="M8 3.800L13.500 14h-11z" stroke="#fff3c0" strokeWidth=".8" /><path d="M8 6v4.500M8 11.500V13" stroke="#b3701c" strokeWidth="1.500" /></Svg>
      <p className="ml-1 pb-0.5">You are using an incomplete translation, please help to make it better by <a href="#" className="text-[#235a81] underline">contributing</a>.</p>
    </div>
    <div className="mt-auto flex h-[17px] w-[75px] items-center gap-1 rounded-tr-sm border-t border-r border-[#aaa] bg-[#ccc] pl-[5px] whitespace-nowrap">
      <svg viewBox="0 0 14 14" className="size-3.5 shrink-0"><rect x=".5" y=".5" width="13" height="13" fill="#eee" stroke="#aaa" /><path d="M2 4h10v8H2z" fill="#222" /></svg>
      Consola
    </div>
  </main>
);

/* ---------- file explorer ---------- */
const Chevron = () => (
  <svg viewBox="0 0 6 8" className="h-2 w-1.5 shrink-0" fill="none" stroke="#777" strokeWidth="1.400"><path d="M1.500 1l3 3-3 3" /></svg>
);
const Caret = ({ className = "" }: P) => (
  <svg viewBox="0 0 10 6" className={`h-1.5 w-2.5 shrink-0 ${className}`} fill="none" stroke="currentColor" strokeWidth="1.800"><path d="M1 .8l4 4 4-4" /></svg>
);

const Explorer = () => (
  <section className="absolute top-[131px] left-[193px] flex w-[1125px] flex-col border border-[#2a63b5] bg-white font-['Open_Sans',sans-serif] text-[11px] text-black shadow-[0_4px_22px_rgba(0,0,0,0.38)]">
    <div className="-mx-px -mt-px flex h-[31px] items-center bg-[#235bac] pl-[9px] text-white">
      <Folder />
      <span className="ml-1.5 h-3 w-px bg-[#7f9fce]" />
      <Svg className="ml-2.5 size-4"><path d="M1.500.5h9l3 3v12h-12z" fill="#fff" stroke="#8a8f98" /><path d="M4 8.500l2.500 3L11.500 5" stroke="#e0562b" strokeWidth="1.800" /></Svg>
      <Folder className="ml-1.5 size-4" />
      <svg viewBox="0 0 8 8" className="ml-1.5 size-2"><path d="M0 1h8" stroke="#fff" strokeWidth="1.500" /><path d="M0 4h8L4 8z" fill="#fff" /></svg>
      <span className="ml-2 h-3 w-px bg-[#7f9fce]" />
      <span className="ml-[7px]">data</span>
      <div className="mr-px ml-auto flex h-full">
        <button aria-label="Minimizar janela" className="flex w-[46px] items-center justify-center"><svg viewBox="0 0 10 10" className="size-2.5" stroke="#fff"><path d="M0 5.500h10" /></svg></button>
        <button aria-label="Maximizar janela" className="flex w-[46px] items-center justify-center"><svg viewBox="0 0 10 10" className="size-2.5" stroke="#fff" fill="none"><path d="M.5.500h9v9h-9z" /></svg></button>
        <button aria-label="Fechar janela" className="flex w-[46px] items-center justify-center"><svg viewBox="0 0 10 10" className="size-2.5" stroke="#fff" strokeWidth="1.100"><path d="M0 0l10 10M10 0L0 10" /></svg></button>
      </div>
    </div>
    <div className="flex h-6 items-center border-b border-[#d9d9d9] text-[#3c3c3c]">
      <button className="h-full w-14 bg-[#1979ca] text-white">Arquivo</button>
      <button className="ml-3.5">Início</button>
      <button className="ml-[29px]">Compartilhar</button>
      <button className="ml-[29px]">Exibir</button>
      <Caret className="mr-3 ml-auto text-[#999]" />
      <svg viewBox="0 0 14 14" className="mr-1 size-3.5"><circle cx="7" cy="7" r="7" fill="#0a6fc8" /><path d="M5 5.500c0-2.700 4-2.700 4 0C9 7 7 7 7 8.500M7 9.700v1.500" stroke="#fff" strokeWidth="1.300" fill="none" /></svg>
    </div>
    <div className="flex h-[35px] items-start pt-1.5 pl-3">
      <div className="flex h-[22px] w-[93px] items-center">
        <Svg className="size-3.5"><path d="M15 8H2M7 2.500L1.500 8 7 13.500" stroke="#6b6b6b" strokeWidth="2" /></Svg>
        <Svg className="ml-4 size-3.5"><path d="M1 8h13M9 2.500L14.500 8 9 13.500" stroke="#d3d3d3" strokeWidth="2" /></Svg>
        <Caret className="ml-[11px] scale-75 text-[#777]" />
        <Svg className="ml-2 size-3.5"><path d="M8 15.500V2M1.800 8L8 1.800 14.200 8" stroke="#6b6b6b" strokeWidth="2" /></Svg>
      </div>
      <div className="flex h-[22px] flex-1 items-center border border-[#d9d9d9] pl-[3px]">
        <Folder />
        <span className="ml-1.5"><Chevron /></span>
        <ol className="ml-1.5 flex items-center gap-[9px] pl-[3px]">
          {crumbs.map((c, i) => (
            <li key={c} className="flex items-center gap-[9px]">{i > 0 && <Chevron />}{c}</li>
          ))}
        </ol>
        <Caret className="mr-0.5 ml-auto text-[#666]" />
        <button aria-label="Atualizar" className="flex h-full w-[18px] items-center justify-center border-l border-[#d9d9d9]">
          <Svg className="size-3"><path d="M12 4A6 6 0 1 1 5 3" stroke="#6b6b6b" strokeWidth="2" /><path d="M6 0v6l-5-2z" fill="#6b6b6b" /></Svg>
        </button>
      </div>
      <div className="mr-3 ml-3 flex h-[22px] w-[202px] items-center border border-[#d9d9d9] pr-2 pl-2">
        <input aria-label="Pesquisar data" placeholder="Pesquisar data" className="min-w-0 flex-1 outline-none placeholder:text-[#6d6d6d]" />
        <Svg className="size-3.5"><circle cx="10" cy="5.500" r="4.300" stroke="#6b6b6b" strokeWidth="1.600" /><path d="M7 9L1.500 14.800" stroke="#6b6b6b" strokeWidth="2.200" /></Svg>
      </div>
    </div>

    <div className="flex h-[520px]">
      <ul className="w-[139px] overflow-hidden pt-4">
        {navItems.map((n, i) => (
          <li key={i} className={`flex h-6 items-center whitespace-nowrap ${n.root ? "pl-6" : "pl-8"} ${n.gap ? "mt-2" : ""} ${n.active ? "bg-[#d9d9d9]" : ""}`}>
            {n.icon}
            <span className={n.pin ? "ml-[5px] w-[72px]" : "ml-[5px]"}>{n.label}</span>
            {n.pin && <PinIcon />}
          </li>
        ))}
      </ul>
      <div className="ml-px flex w-4 shrink-0 flex-col items-center bg-[#f0f0f0]">
        <span className="flex h-[17px] shrink-0 items-center"><Caret className="rotate-180 text-[#555]" /></span>
        <span className="h-[432px] w-full shrink-0 bg-[#cdcdcd]" />
        <span className="mt-auto flex h-4 items-center"><Caret className="text-[#555]" /></span>
      </div>
      <div className="ml-0.5 flex-1 border-l border-[#f2f2f2]">
        <table className="ml-[15px] w-[574px] table-fixed">
          <thead>
            <tr className="h-[25px] text-left text-[#4c607a]">
              <th className="relative w-[257px] border-r border-[#e5e5e5] pl-[3px] font-normal">
                Nome
                <svg viewBox="0 0 10 6" className="absolute top-0 left-[122px] h-1.5 w-2.5" fill="none" stroke="#888"><path d="M1 5l4-4 4 4" /></svg>
              </th>
              <th className="w-[120px] border-r border-[#e5e5e5] pl-1.5 font-normal whitespace-nowrap">Data de modificaç...</th>
              <th className="w-[120px] border-r border-[#e5e5e5] pl-1.5 font-normal">Tipo</th>
              <th className="relative pl-1.5 font-normal after:absolute after:top-0 after:-right-[3px] after:h-full after:w-px after:bg-[#e5e5e5]">Tamanho</th>
            </tr>
            <tr className="h-1.5"><td colSpan={4} /></tr>
          </thead>
          <tbody>
            {files.map(([name, date, type, size], i) => (
              <tr key={name} className={`h-[21px] text-[#6d6d6d] ${i === 2 ? "bg-[#cce8ff] outline-1 -outline-offset-1 outline-[#99d1ff]" : ""}`}>
                <td className="text-black"><span className="flex h-[21px] items-center gap-1 pl-1">{i < 3 ? <Folder /> : <FileIcon />}{name}</span></td>
                <td className="pl-1.5">{date}</td>
                <td className="pl-1.5">{type}</td>
                <td className="pr-1 text-right">{size}</td>
              </tr>
            ))}
          </tbody>
        </table>
      </div>
    </div>

    <div className="flex h-[23px] items-center pl-3.5 text-[#1e395b]">
      <span>11 itens</span>
      <span className="ml-2.5 h-3 w-px bg-[#eee]" />
      <span className="ml-2.5">1 item selecionado</span>
      <span className="ml-2.5 h-3 w-px bg-[#eee]" />
      <button aria-label="Detalhes" className="ml-auto flex h-[23px] w-[22px] items-center justify-center border border-[#26a0da] bg-[#cbe8f6]">
        <Svg><path d="M.5 1.500h4v13h-4zM.5 6h4M.5 10.500h4" stroke="#8a8a8a" fill="#fff" /><path d="M6.500 3.500h4M12 3.500h4M6.500 8h4M12 8h4M6.500 12.500h4M12 12.500h4" stroke="#666" /><path d="M2 12.500h1" stroke="#d33" /></Svg>
      </button>
      <button aria-label="Miniaturas" className="mr-2 ml-1"><svg viewBox="0 0 14 12" className="h-3 w-3.5"><rect x=".5" y=".5" width="13" height="11" fill="#fff" stroke="#8e8e8e" /><path d="M2 2h10v8H2z" fill="#86b9f4" /><path d="M2 5l4 1.500 6 1V10H2z" fill="#2d4f5b" /></svg></button>
    </div>
  </section>
);

export default function App() {
  return (
    <div className="relative flex min-h-screen flex-col overflow-hidden bg-white font-['Liberation_Sans',Arial,sans-serif] text-[13px] text-[#444]">
      <Browser />
      <div className="flex flex-1">
        <Sidebar />
        <Main />
      </div>
      <div className="h-0.5 bg-[#222]" />
      <Explorer />

      <div className="pointer-events-none absolute top-[293px] left-px h-[70px] w-[182px] border-[5px] border-[#ed1c24]" />
      <div className="pointer-events-none absolute top-[245px] left-[351px] h-[73px] w-[175px] border-[5px] border-[#ed1c24]" />
      <div className="pointer-events-none absolute top-[189px] left-[329px] h-7 w-[522px] border-[5px] border-[#22b14c]" />
      <svg viewBox="0 0 180 60" className="pointer-events-none absolute top-[275px] left-[177px] h-[60px] w-[180px]" aria-hidden="true">
        <path d="M1 53.500L176 6.500" stroke="#ed1c24" strokeWidth="5" />
      </svg>
    </div>
  );
}
